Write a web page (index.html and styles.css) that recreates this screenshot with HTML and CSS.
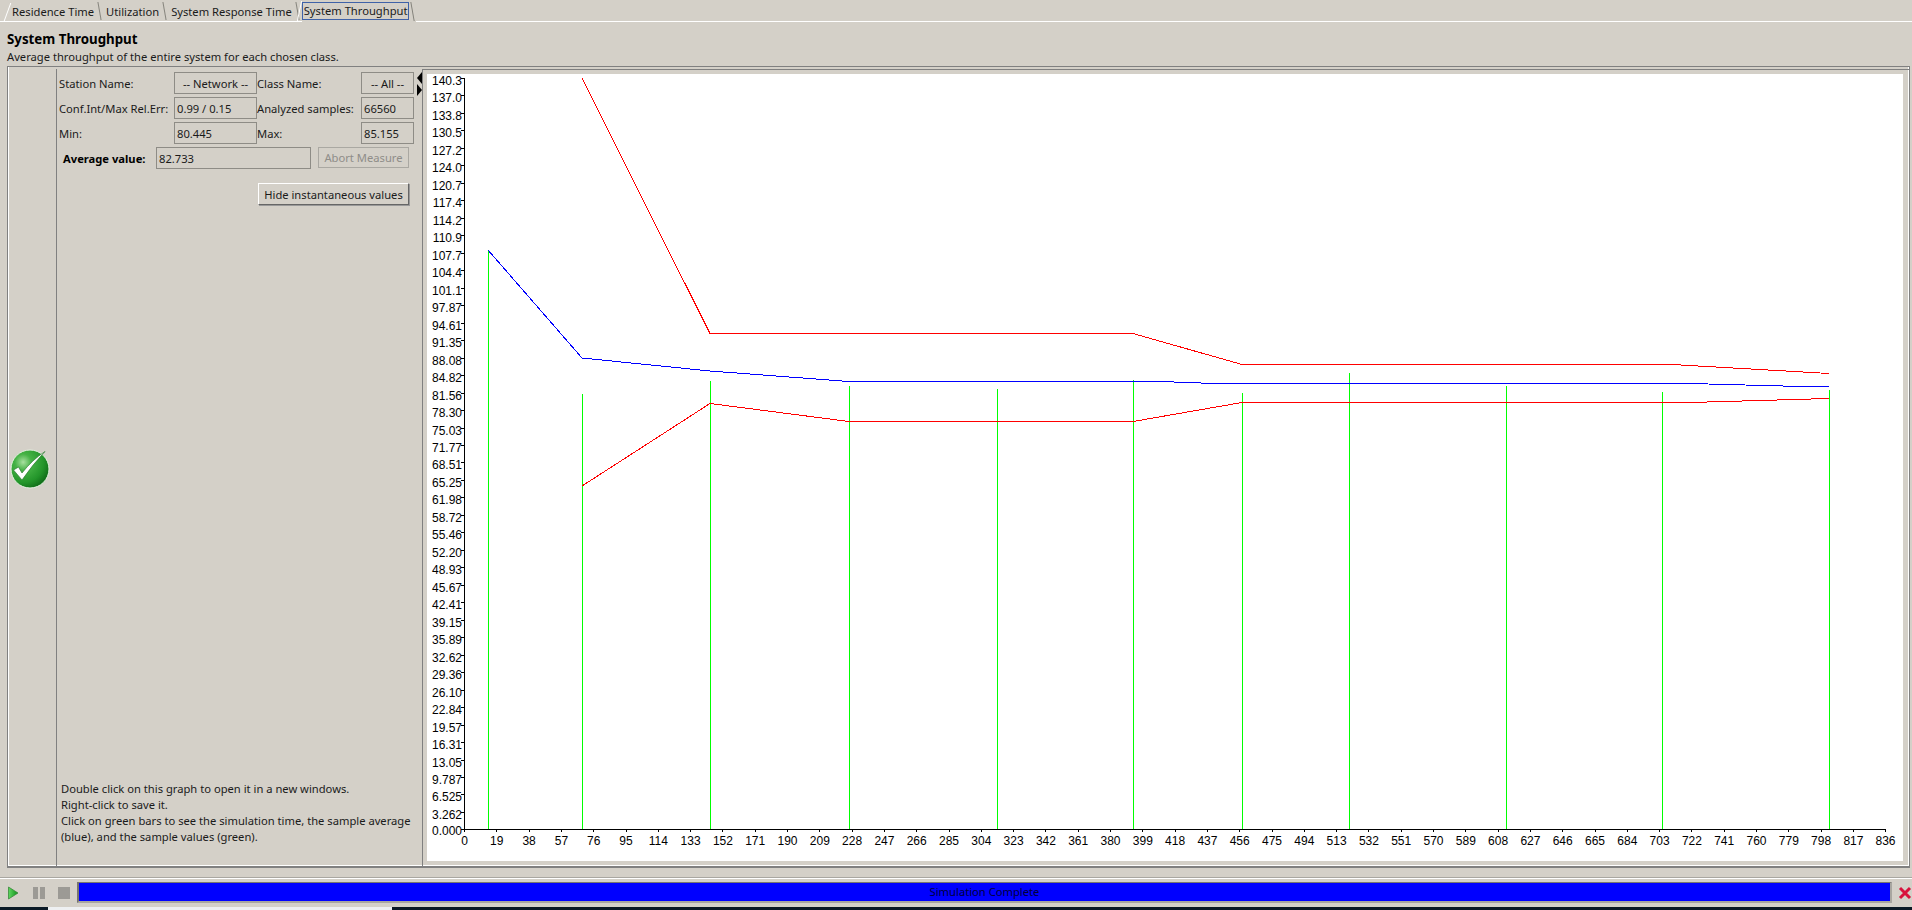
FILE: index.html
```html
<!DOCTYPE html>
<html lang="en">
<head>
  <meta charset="UTF-8">
  <title>System Throughput</title>
  <link rel="stylesheet" href="styles.css">
</head>
<body>
  <!-- tabs -->
  <div class="tabs">
    <span class="tab first">Residence Time</span>
    <span class="tab">Utilization</span>
    <span class="tab">System Response Time</span>
    <span class="tab active"><span class="focus">System Throughput</span></span>
  </div>

  <div class="page">
    <h2>System Throughput</h2>
    <p class="desc">Average throughput of the entire system for each chosen class.</p>

    <div class="frame">
      <div class="state">
        <svg class="ok-icon" width="40" height="40" viewBox="0 0 40 40">
          <defs>
            <radialGradient id="ball" cx="32%" cy="32%" r="72%">
              <stop offset="0" stop-color="#a8e0a0"/>
              <stop offset=".3" stop-color="#45b245"/>
              <stop offset=".75" stop-color="#23952a"/>
              <stop offset="1" stop-color="#12701a"/>
            </radialGradient>
          </defs>
          <circle cx="20" cy="20" r="19" fill="url(#ball)" stroke="#e4f2e0" stroke-width="1"/>
          <path d="M3.5 21 L8.5 18 L12 24 Q22 11 35 2.5 Q23 15 12 31 Z" fill="#fff" stroke="#2f7d35" stroke-width=".7"/>
        </svg>
      </div>

      <div class="info">
        <div class="fields">
          <span class="lbl">Station Name:</span><span class="val center">-- Network --</span>
          <span class="lbl">Class Name:</span><span class="val center">-- All --</span>
          <span class="lbl">Conf.Int/Max Rel.Err:</span><span class="val">0.99 / 0.15</span>
          <span class="lbl">Analyzed samples:</span><span class="val">66560</span>
          <span class="lbl">Min:</span><span class="val">80.445</span>
          <span class="lbl">Max:</span><span class="val">85.155</span>
        </div>
        <div class="avg-row">
          <strong class="avg-lbl">Average value:</strong>
          <span class="val avg-val">82.733</span>
          <button class="btn flat" disabled>Abort Measure</button>
        </div>
        <div class="hide-row"><button class="btn">Hide instantaneous values</button></div>
        <p class="help">Double click on this graph to open it in a new windows.<br>
          Right-click to save it.<br>
          Click on green bars to see the simulation time, the sample average<br>
          (blue), and the sample values (green).</p>
      </div>

      <div class="splitter"><i class="arrow left"></i><i class="arrow right"></i></div>

      <div class="plot">
        <svg class="chart" width="1476" height="787" viewBox="427 74 1476 787">
          <g class="bars">
            <line x1="488.5" y1="250" x2="488.5" y2="829"/>
            <line x1="582.5" y1="394" x2="582.5" y2="829"/>
            <line x1="710.5" y1="381" x2="710.5" y2="829"/>
            <line x1="849.5" y1="386" x2="849.5" y2="829"/>
            <line x1="997.5" y1="389" x2="997.5" y2="829"/>
            <line x1="1133.5" y1="380" x2="1133.5" y2="829"/>
            <line x1="1242.5" y1="393" x2="1242.5" y2="829"/>
            <line x1="1349.5" y1="373" x2="1349.5" y2="829"/>
            <line x1="1506.5" y1="386" x2="1506.5" y2="829"/>
            <line x1="1662.5" y1="392" x2="1662.5" y2="829"/>
            <line x1="1829.5" y1="390" x2="1829.5" y2="829"/>
          </g>
          <polyline class="red" points="582,78 710,333.5 1133,333.5 1242,364.5 1672,364.5 1829,373.5"/>
          <polyline class="red" points="582,486 710,403.5 849,421.5 1133,421.5 1242,402.5 1690,402.5 1829,398.5"/>
          <polyline class="blue" points="488,250 582,358 710,371 849,381.5 1160,381.5 1215,383.5 1690,383.5 1745,385 1802,386.5 1829,386.5"/>

          <path class="axis" d="M464.5 78V829.5H1886"/>
          <path class="axis" d="M461 78.5h3M461 95.9h3M461 113.4h3M461 130.9h3M461 148.4h3M461 165.8h3M461 183.3h3M461 200.8h3M461 218.3h3M461 235.7h3M461 253.2h3M461 270.7h3M461 288.2h3M461 305.6h3M461 323.1h3M461 340.6h3M461 358.1h3M461 375.5h3M461 393h3M461 410.5h3M461 428h3M461 445.4h3M461 462.9h3M461 480.4h3M461 497.9h3M461 515.3h3M461 532.8h3M461 550.3h3M461 567.8h3M461 585.2h3M461 602.7h3M461 620.2h3M461 637.7h3M461 655.1h3M461 672.6h3M461 690.1h3M461 707.6h3M461 725h3M461 742.5h3M461 760h3M461 777.5h3M461 794.9h3M461 812.4h3M461 829.5h3"/>
          <path class="axis" d="M464.5 830v2M496.8 830v2M529.1 830v2M561.4 830v2M593.7 830v2M626 830v2M658.3 830v2M690.6 830v2M722.9 830v2M755.2 830v2M787.5 830v2M819.8 830v2M852.1 830v2M884.4 830v2M916.7 830v2M949 830v2M981.3 830v2M1013.6 830v2M1045.9 830v2M1078.2 830v2M1110.5 830v2M1142.8 830v2M1175.1 830v2M1207.4 830v2M1239.7 830v2M1272 830v2M1304.3 830v2M1336.6 830v2M1368.9 830v2M1401.2 830v2M1433.5 830v2M1465.8 830v2M1498.1 830v2M1530.4 830v2M1562.7 830v2M1595 830v2M1627.3 830v2M1659.6 830v2M1691.9 830v2M1724.2 830v2M1756.5 830v2M1788.8 830v2M1821.1 830v2M1853.4 830v2M1885.5 830v2"/>

          <g class="ylabels">
            <text x="462" y="85">140.3</text><text x="462" y="102">137.0</text><text x="462" y="120">133.8</text><text x="462" y="137">130.5</text><text x="462" y="155">127.2</text><text x="462" y="172">124.0</text><text x="462" y="190">120.7</text><text x="462" y="207">117.4</text><text x="462" y="225">114.2</text><text x="462" y="242">110.9</text><text x="462" y="260">107.7</text><text x="462" y="277">104.4</text><text x="462" y="295">101.1</text><text x="462" y="312">97.87</text><text x="462" y="330">94.61</text><text x="462" y="347">91.35</text><text x="462" y="365">88.08</text><text x="462" y="382">84.82</text><text x="462" y="400">81.56</text><text x="462" y="417">78.30</text><text x="462" y="435">75.03</text><text x="462" y="452">71.77</text><text x="462" y="469">68.51</text><text x="462" y="487">65.25</text><text x="462" y="504">61.98</text><text x="462" y="522">58.72</text><text x="462" y="539">55.46</text><text x="462" y="557">52.20</text><text x="462" y="574">48.93</text><text x="462" y="592">45.67</text><text x="462" y="609">42.41</text><text x="462" y="627">39.15</text><text x="462" y="644">35.89</text><text x="462" y="662">32.62</text><text x="462" y="679">29.36</text><text x="462" y="697">26.10</text><text x="462" y="714">22.84</text><text x="462" y="732">19.57</text><text x="462" y="749">16.31</text><text x="462" y="767">13.05</text><text x="462" y="784">9.787</text><text x="462" y="801">6.525</text><text x="462" y="819">3.262</text><text x="462" y="835">0.000</text>
          </g>
          <g class="xlabels">
            <text x="464.5" y="845">0</text><text x="496.8" y="845">19</text><text x="529.1" y="845">38</text><text x="561.4" y="845">57</text><text x="593.7" y="845">76</text><text x="626" y="845">95</text><text x="658.3" y="845">114</text><text x="690.6" y="845">133</text><text x="722.9" y="845">152</text><text x="755.2" y="845">171</text><text x="787.5" y="845">190</text><text x="819.8" y="845">209</text><text x="852.1" y="845">228</text><text x="884.4" y="845">247</text><text x="916.7" y="845">266</text><text x="949" y="845">285</text><text x="981.3" y="845">304</text><text x="1013.6" y="845">323</text><text x="1045.9" y="845">342</text><text x="1078.2" y="845">361</text><text x="1110.5" y="845">380</text><text x="1142.8" y="845">399</text><text x="1175.1" y="845">418</text><text x="1207.4" y="845">437</text><text x="1239.7" y="845">456</text><text x="1272" y="845">475</text><text x="1304.3" y="845">494</text><text x="1336.6" y="845">513</text><text x="1368.9" y="845">532</text><text x="1401.2" y="845">551</text><text x="1433.5" y="845">570</text><text x="1465.8" y="845">589</text><text x="1498.1" y="845">608</text><text x="1530.4" y="845">627</text><text x="1562.7" y="845">646</text><text x="1595" y="845">665</text><text x="1627.3" y="845">684</text><text x="1659.6" y="845">703</text><text x="1691.9" y="845">722</text><text x="1724.2" y="845">741</text><text x="1756.5" y="845">760</text><text x="1788.8" y="845">779</text><text x="1821.1" y="845">798</text><text x="1853.4" y="845">817</text><text x="1885.5" y="845">836</text>
          </g>
        </svg>
      </div>
    </div>
  </div>

  <!-- simulation controls -->
  <div class="statusbar">
    <svg class="ctl" width="14" height="16" viewBox="0 0 14 16">
      <defs>
        <linearGradient id="play" x1="0" y1="0" x2="1" y2="0">
          <stop offset="0" stop-color="#5fd85f"/>
          <stop offset="1" stop-color="#0f8f1a"/>
        </linearGradient>
      </defs>
      <path d="M2.5 2 L12 8 L2.5 14 Z" fill="url(#play)" stroke="#3a8a3a" stroke-width=".8"/>
    </svg>
    <span class="pause"><i></i><i></i></span>
    <span class="stop"></span>
    <div class="progress">Simulation Complete</div>
    <svg class="close" width="14" height="14" viewBox="0 0 14 14"><path d="M2 2 L12 12 M12 2 L2 12" stroke="#d8123c" stroke-width="3"/></svg>
  </div>
  <div class="desktop"><span class="win"></span></div>
</body>
</html>
```
FILE: styles.css
```css
*{box-sizing:border-box;margin:0;padding:0;}

html,body{height:100%;overflow:hidden;}

body{
  display:flex;
  flex-direction:column;
  width:1912px;
  height:910px;
  background:#d4d0c8;
  color:#1a1a1a;
  font-family:"Noto Sans","Liberation Sans",sans-serif;
  font-size:11.2px;
}

/* ---------- tabs ---------- */
.tabs{
  display:flex;
  height:22px;
  padding-left:12px;
  border-bottom:1px solid #fff;
}
.tab{
  position:relative;
  height:21px;
  padding:4px 12px 0 0;
  line-height:16px;
  white-space:nowrap;
}
.tab::after{
  content:"";
  position:absolute;
  top:2px;
  right:6px;
  width:1px;
  height:18px;
  background:#85837c;
  transform:skewX(10deg);
}
.tab.first::before{
  content:"";
  position:absolute;
  top:3px;
  left:-5px;
  width:1px;
  height:18px;
  background:#fff;
  transform:skewX(-20deg);
}
.tab.active{
  height:22px;
  margin-left:-2px;
  padding:2px 0 0 0;
  background:#d4d0c8;
  width:114px;
}
.tab.active::before{
  content:"";
  position:absolute;
  top:1px;
  left:-3px;
  width:1px;
  height:20px;
  background:#fff;
  transform:skewX(-12deg);
}
.tab.active::after{right:3px;height:19px;}
.focus{
  display:block;
  width:107px;
  height:18px;
  padding-left:1px;
  line-height:15px;
  border:1px solid #3f62a8;
}

/* ---------- header ---------- */
.page{
  display:flex;
  flex-direction:column;
  height:855px;
  padding:9px 2px 0 7px;
}
h2{
  font-size:13.3px;
  line-height:17px;
  font-weight:bold;
  color:#000;
}
.desc{
  line-height:15px;
  margin-top:1px;
  margin-bottom:2px;
}

/* ---------- main frame ---------- */
.frame{
  display:flex;
  height:802px;
  padding-top:2px;
  border-top:1px solid #808080;
  border-left:1px solid #808080;
  border-right:1px solid #808080;
  border-bottom:2px solid #808080;
  box-shadow:inset 1px 0 0 #fff, inset -1px -1px 0 #fff;
}
.state{
  display:flex;
  align-items:center;
  width:47px;
  margin-left:2px;
  padding-top:2px;
  border-right:1px solid #808080;
}
.info{
  display:flex;
  flex-direction:column;
  width:360px;
  padding:3px 3px 0 2px;
}
.fields{
  display:grid;
  grid-template-columns:115px 83px 104px 53px;
  grid-auto-rows:22px;
  row-gap:3px;
  align-items:stretch;
}
.lbl{
  display:flex;
  align-items:center;
  white-space:nowrap;
}
.val{
  display:flex;
  align-items:center;
  padding-left:2px;
  border:1px solid #8e8c86;
  white-space:nowrap;
}
.val.center{justify-content:center;padding-left:0;}
.avg-row{
  display:flex;
  align-items:stretch;
  height:22px;
  margin-top:3px;
  padding-left:4px;
}
.avg-lbl{
  align-self:center;
  width:93px;
  color:#000;
}
.avg-val{width:155px;}
.btn{
  font:inherit;
  color:#1a1a1a;
  background:#d4d0c8;
  border:1px solid #fff;
  border-right-color:#666;
  border-bottom-color:#666;
  box-shadow:1px 1px 0 #999;
}
.btn.flat{
  width:91px;
  margin-left:7px;
  color:#8f8d88;
  border:1px solid #aaa8a2;
  box-shadow:none;
  height:21px;
}
.hide-row{
  display:flex;
  justify-content:flex-end;
  margin-top:14px;
  padding-right:5px;
}
.hide-row .btn{width:151px;height:22px;}
.help{
  margin-top:auto;
  margin-bottom:21px;
  padding-left:2px;
  line-height:16px;
  white-space:nowrap;
}

/* ---------- splitter ---------- */
.splitter{
  display:flex;
  flex-direction:column;
  width:6px;
  padding-top:3px;
  border-right:1px solid #808080;
}
.arrow{
  display:block;
  width:0;
  height:0;
  border-top:6px solid transparent;
  border-bottom:6px solid transparent;
}
.arrow.left{border-right:5px solid #000;}
.arrow.right{border-left:5px solid #000;}

/* ---------- chart ---------- */
.plot{
  flex:1;
  padding:4px 5px 0 4px;
  border-top:1px solid #808080;
}
.chart{display:block;background:#fff;}
.bars line{stroke:#00ff00;stroke-width:1;shape-rendering:crispEdges;}
.red,.blue{fill:none;stroke-width:1;shape-rendering:crispEdges;}
.red{stroke:#ff0000;}
.blue{stroke:#0000ff;}
.axis{fill:none;stroke:#000;stroke-width:1;shape-rendering:crispEdges;}
.chart text{font-family:"Liberation Sans",Arial,sans-serif;font-size:12px;fill:#000;}
.ylabels text{text-anchor:end;}
.xlabels text{text-anchor:middle;}

/* ---------- status bar ---------- */
.statusbar{
  display:flex;
  align-items:center;
  height:30px;
  padding:0 0 0 6px;
  border-top:1px solid #a9a7a1;
  box-shadow:inset 0 1px 0 #fff;
}
.ctl{margin-right:13px;}
.pause{display:flex;gap:2px;margin-right:13px;}
.pause i{display:block;width:5px;height:12px;background:#9c9a95;}
.stop{width:12px;height:12px;margin-right:7px;background:#9c9a95;}
.progress{
  flex:1;
  height:21px;
  line-height:18px;
  text-align:center;
  color:#00003c;
  background:#0000ff;
  border:2px solid #77756f;
  border-top-width:1px;
  border-right-color:#a8a6a0;
  border-bottom-color:#a8a6a0;
}
.close{margin:0 0 0 6px;}
.desktop{
  flex:1;
  padding-left:48px;
  padding-right:1520px;
  background:#0b1a26;
}
.win{display:block;height:100%;background:#eef0f2;}
```
